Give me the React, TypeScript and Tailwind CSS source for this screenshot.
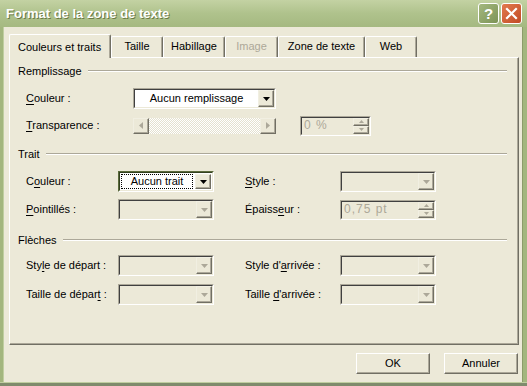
import React from "react";

type P = { className?: string; children?: React.ReactNode };

function Tri({ dir, color, w = 7, h = 4 }: { dir: "down" | "up" | "left" | "right"; color: string; w?: number; h?: number }) {
  let pts = "";
  if (dir === "down") pts = `0,0 ${w},0 ${w / 2},${h}`;
  if (dir === "up") pts = `0,${h} ${w},${h} ${w / 2},0`;
  if (dir === "left") pts = `${w},0 ${w},${h} 0,${h / 2}`;
  if (dir === "right") pts = `0,0 0,${h} ${w},${h / 2}`;
  return (
    <svg width={w} height={h} viewBox={`0 0 ${w} ${h}`} className="block">
      <polygon points={pts} fill={color} />
    </svg>
  );
}

function Raised({ className = "", children }: P) {
  return (
    <div
      className={`flex items-center justify-center bg-[#ece9d8] border border-t-[#f1efe2] border-l-[#f1efe2] border-r-[#716f64] border-b-[#716f64] shadow-[inset_-1px_-1px_0_#aca899] ${className}`}
    >
      {children}
    </div>
  );
}

function Sunken({ className = "", inner = "", children }: P & { inner?: string }) {
  return (
    <div className={`border border-t-[#aca899] border-l-[#aca899] border-r-white border-b-white ${className}`}>
      <div className={`h-full flex border border-t-[#404040] border-l-[#404040] border-r-[#ece9d8] border-b-[#ece9d8] ${inner}`}>
        {children}
      </div>
    </div>
  );
}

function Combo({ className = "", disabled, text, white }: { className?: string; disabled?: boolean; text?: string; white?: boolean }) {
  return (
    <Sunken className={`h-[21px] ${className}`} inner={white ? "bg-white" : "bg-[#ece9d8]"}>
      <div className="flex-1 flex items-center justify-center">{text}</div>
      <Raised className="w-[16px] h-full">
        <Tri dir="down" color={disabled ? "#aca899" : "#000"} />
      </Raised>
    </Sunken>
  );
}

function Spin({ className = "", text }: { className?: string; text: string }) {
  return (
    <Sunken className={`h-[20px] ${className}`} inner="bg-[#ece9d8]">
      <div className="flex-1 flex items-center pl-[2px] text-[#aca899] text-[12px] tracking-[1px]">{text}</div>
      <div className="w-[16px] h-full flex flex-col">
        <Raised className="flex-1">
          <Tri dir="up" color="#aca899" w={5} h={3} />
        </Raised>
        <Raised className="flex-1">
          <Tri dir="down" color="#aca899" w={5} h={3} />
        </Raised>
      </div>
    </Sunken>
  );
}

function Header({ text }: { text: string }) {
  return (
    <div className="flex items-center h-[14px] pl-[8px] pr-[11px]">
      <span>{text}</span>
      <div className="flex-1 ml-[6px] h-0 border-t border-t-[#aca899] border-b border-b-white" />
    </div>
  );
}

function U({ children }: P) {
  return <span className="underline underline-offset-[2px]">{children}</span>;
}

function Tab({ className = "", children, disabled }: P & { disabled?: boolean }) {
  return (
    <div
      className={`h-[21px] flex items-start justify-center pt-[3px] bg-[#ece9d8] border-t border-l border-white border-r border-r-[#716f64] rounded-t-[2px] shadow-[inset_-1px_0_0_#aca899] ${disabled ? "text-[#aca899]" : ""} ${className}`}
    >
      {children}
    </div>
  );
}

export default function App() {
  return (
    <div className="w-[527px] h-[386px] flex flex-col overflow-hidden bg-[#a3b67e] text-[11px] leading-[13px] text-black font-['Liberation_Sans',Arial,sans-serif]">
      {/* Title bar */}
      <div className="h-[27px] flex items-center pl-[6px] pr-[5px] bg-gradient-to-b from-[#c3d2a3] via-[#afc28c] to-[#a5b981]">
        <span className="text-white font-bold text-[13px] leading-[16px] [text-shadow:1px_1px_0_#6a7a45]">
          Format de la zone de texte
        </span>
        <div className="ml-auto flex gap-[2px]">
          <div className="w-[21px] h-[21px] rounded-[3px] border border-white bg-gradient-to-br from-[#a4b87f] to-[#7d9456] flex items-center justify-center text-white font-bold text-[15px] leading-none">
            ?
          </div>
          <div className="w-[21px] h-[21px] rounded-[3px] border border-white bg-gradient-to-br from-[#e27a4e] to-[#c24a24] flex items-center justify-center">
            <svg width="13" height="13" viewBox="0 0 13 13">
              <path d="M2 2 L11 11 M11 2 L2 11" stroke="#fff" strokeWidth="2.2" strokeLinecap="square" />
            </svg>
          </div>
        </div>
      </div>

      {/* Body */}
      <div className="flex-1 flex">
        <div className="w-[4px] bg-[#a3b67e] border-r border-r-[#c0cea0]" />
        <div className="flex-1 bg-[#ece9d8] pt-[7px] pl-[5px] pr-[3px] flex flex-col">
          {/* Tabs */}
          <div className="relative z-10 flex items-end h-[23px]">
            <div className="w-[102px] h-[24px] -mb-px flex items-start pt-[6px] pl-[8px] bg-[#ece9d8] border-t border-l border-white border-r border-r-[#716f64] rounded-t-[2px] shadow-[inset_-1px_0_0_#aca899]">
              Couleurs et traits
            </div>
            <Tab className="w-[52px]">Taille</Tab>
            <Tab className="w-[62px]">Habillage</Tab>
            <Tab className="w-[53px]" disabled>
              Image
            </Tab>
            <Tab className="w-[87px]">Zone de texte</Tab>
            <Tab className="w-[52px]">Web</Tab>
          </div>

          {/* Panel */}
          <div className="h-[288px] flex flex-col pt-[6px] border-t border-l border-white border-r border-b border-r-[#716f64] border-b-[#716f64] shadow-[inset_-1px_-1px_0_#aca899]">
            <Header text="Remplissage" />
            <div className="mt-[10px] h-[21px] flex items-center pl-[16px]">
              <span className="w-[107px]">
                <U>C</U>ouleur :
              </span>
              <Combo className="w-[143px]" white text="Aucun remplissage" />
            </div>
            <div className="mt-[6px] h-[21px] flex items-center pl-[16px]">
              <span className="w-[107px]">
                <U>T</U>ransparence :
              </span>
              <div className="w-[143px] h-[16px] flex">
                <Raised className="w-[16px] h-full">
                  <Tri dir="left" color="#aca899" w={4} h={7} />
                </Raised>
                <div className="flex-1 bg-[repeating-conic-gradient(#ffffff_0%_25%,#e4e1cf_0%_50%)] bg-[length:2px_2px]" />
                <Raised className="w-[16px] h-full">
                  <Tri dir="right" color="#aca899" w={4} h={7} />
                </Raised>
              </div>
              <div className="w-[24px]" />
              <Spin className="w-[71px]" text="0 %" />
            </div>

            <div className="mt-[11px]">
              <Header text="Trait" />
            </div>
            <div className="mt-[10px] h-[21px] flex items-center pl-[16px]">
              <span className="w-[92px]">
                C<U>o</U>uleur :
              </span>
              <div className="w-[96px] h-[21px] border border-t-[#5b6b3c] border-l-[#5b6b3c] border-r-white border-b-white">
                <div className="h-full flex items-center border border-t-[#33401f] border-l-[#33401f] border-r-[#ece9d8] border-b-[#ece9d8] bg-white p-[1px]">
                  <div className="flex-1 h-full flex items-center justify-center border border-dotted border-black">
                    Aucun trait
                  </div>
                  <Raised className="ml-[2px] w-[16px] h-full">
                    <Tri dir="down" color="#000" />
                  </Raised>
                </div>
              </div>
              <div className="w-[31px]" />
              <span className="w-[95px]">
                <U>S</U>tyle :
              </span>
              <Combo className="w-[96px]" disabled />
            </div>
            <div className="mt-[7px] h-[21px] flex items-center pl-[16px]">
              <span className="w-[92px]">
                <U>P</U>ointillés :
              </span>
              <Combo className="w-[96px]" disabled />
              <div className="w-[31px]" />
              <span className="w-[95px]">
                Épaiss<U>e</U>ur :
              </span>
              <Spin className="w-[96px]" text="0,75 pt" />
            </div>

            <div className="mt-[13px]">
              <Header text="Flèches" />
            </div>
            <div className="mt-[8px] h-[21px] flex items-center pl-[16px]">
              <span className="w-[92px]">
                Sty<U>l</U>e de départ :
              </span>
              <Combo className="w-[96px]" disabled />
              <div className="w-[31px]" />
              <span className="w-[95px]">
                Style d'<U>a</U>rrivée :
              </span>
              <Combo className="w-[96px]" disabled />
            </div>
            <div className="mt-[8px] h-[21px] flex items-center pl-[16px]">
              <span className="w-[92px]">
                Taille de dépar<U>t</U> :
              </span>
              <Combo className="w-[96px]" disabled />
              <div className="w-[31px]" />
              <span className="w-[95px]">
                Taille <U>d</U>'arrivée :
              </span>
              <Combo className="w-[96px]" disabled />
            </div>
          </div>

          {/* Buttons */}
          <div className="mt-[8px] flex justify-end gap-[14px] pr-[1px]">
            <div className="w-[74px] h-[21px] flex items-center justify-center bg-[#ece9d8] border border-t-white border-l-white border-r-[#716f64] border-b-[#716f64] shadow-[inset_-1px_-1px_0_#aca899]">
              OK
            </div>
            <div className="w-[74px] h-[21px] flex items-center justify-center bg-[#ece9d8] border border-t-white border-l-white border-r-[#716f64] border-b-[#716f64] shadow-[inset_-1px_-1px_0_#aca899]">
              Annuler
            </div>
          </div>
        </div>
        <div className="w-[5px] bg-[#a3b67e] border-l border-l-[#8c9c6a]" />
      </div>
      <div className="h-[4px] border-t border-t-[#c0cea0] bg-[#7f8b6c]" />
    </div>
  );
}
